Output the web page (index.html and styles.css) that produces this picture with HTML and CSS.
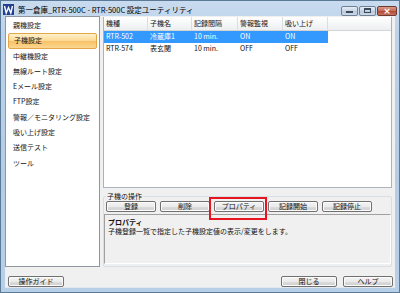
FILE: index.html
```html
<!DOCTYPE html>
<html lang="ja">
<head>
  <meta charset="UTF-8" />
  <title>第一倉庫_RTR-500C - RTR-500C 設定ユーティリティ</title>
  <link rel="stylesheet" href="styles.css">
</head>
<body>
  <div class="window">
    <!-- Title bar -->
    <div class="titlebar">
      <svg class="app-icon" width="11" height="11" viewBox="0 0 11 11">
        <rect x="0" y="0" width="11" height="11" fill="#23408e"/>
        <polyline points="1.5,2 3.2,9 5.5,3.5 7.8,9 9.5,2" fill="none" stroke="#fff" stroke-width="1.4"/>
      </svg>
      <span class="title">第一倉庫_RTR-500C - RTR-500C 設定ユーティリティ</span>
      <div class="controls">
        <div class="ctrl"><span class="glyph-min"></span></div>
        <div class="ctrl"><span class="glyph-max"></span></div>
        <div class="ctrl close"><span class="glyph-x">×</span></div>
      </div>
    </div>

    <div class="client">
      <div class="main">
        <!-- Left menu -->
        <ul class="menu">
          <li>親機設定</li>
          <li class="selected">子機設定</li>
          <li>中継機設定</li>
          <li>無線ルート設定</li>
          <li>Eメール設定</li>
          <li>FTP設定</li>
          <li>警報／モニタリング設定</li>
          <li>吸い上げ設定</li>
          <li>送信テスト</li>
          <li>ツール</li>
        </ul>

        <div class="content">
          <!-- Remote unit list -->
          <div class="listview">
            <div class="row head">
              <div class="cell">機種</div>
              <div class="cell">子機名</div>
              <div class="cell">記録間隔</div>
              <div class="cell">警報監視</div>
              <div class="cell">吸い上げ</div>
              <div class="cell filler"></div>
            </div>
            <div class="row active">
              <div class="cell">RTR-502</div>
              <div class="cell">冷蔵庫1</div>
              <div class="cell">10 min.</div>
              <div class="cell">ON</div>
              <div class="cell">ON</div>
            </div>
            <div class="row">
              <div class="cell">RTR-574</div>
              <div class="cell">表玄関</div>
              <div class="cell">10 min.</div>
              <div class="cell">OFF</div>
              <div class="cell">OFF</div>
            </div>
          </div>

          <!-- Operations -->
          <fieldset class="group">
            <legend>子機の操作</legend>
            <div class="ops">
              <button class="btn">登録</button>
              <button class="btn">削除</button>
              <button class="btn">プロパティ</button>
              <button class="btn">記録開始</button>
              <button class="btn">記録停止</button>
            </div>
            <div class="desc">
              <div class="desc-title">プロパティ</div>
              <div>子機登録一覧で指定した子機設定値の表示/変更をします。</div>
            </div>
            <div class="highlight"></div>
          </fieldset>
        </div>
      </div>

      <div class="footer">
        <button class="btn wide">操作ガイド</button>
        <div class="spacer"></div>
        <button class="btn wide">閉じる</button>
        <button class="btn wide">ヘルプ</button>
      </div>
    </div>
  </div>
</body>
</html>
```

FILE: styles.css
```css
* {
  box-sizing: border-box;
}

html, body {
  margin: 0;
  padding: 0;
  width: 400px;
  height: 293px;
  overflow: hidden;
}

body {
  font-family: "Noto Sans CJK JP", "Liberation Sans", sans-serif;
  font-size: 7px;
  color: #111;
}

.window {
  width: 400px;
  height: 293px;
  border: 1px solid #5b7a98;
  background: linear-gradient(to bottom, #c8dbef 0%, #bcd2ea 12%, #b4cce6 60%, #b8cfe8 100%);
  display: flex;
  flex-direction: column;
}

/* Title bar */
.titlebar {
  height: 15px;
  display: flex;
  align-items: center;
  padding: 0 2px 0 2px;
}

.app-icon {
  flex: none;
  margin-right: 4px;
  margin-top: 1px;
}

.title {
  font-size: 7.5px;
  color: #000;
  white-space: nowrap;
  margin-top: 2px;
}

.controls {
  margin-left: auto;
  display: flex;
  gap: 1px;
  margin-top: 4px;
}

.ctrl {
  width: 17px;
  height: 10px;
  border: 1px solid #6f8196;
  border-radius: 2px;
  background: linear-gradient(to bottom, #e6edf5, #c9d5e2 50%, #b9c8d8 51%, #cdd9e6);
  display: flex;
  align-items: center;
  justify-content: center;
}

.ctrl.close {
  width: 20px;
  border-color: #6b3a30;
  background: linear-gradient(to bottom, #d99a8a, #c46a55 50%, #b04a36 51%, #c8725c);
}

.glyph-min {
  width: 7px;
  height: 2px;
  background: #3a4a5c;
  margin-top: 3px;
}

.glyph-max {
  width: 7px;
  height: 5px;
  border: 1px solid #3a4a5c;
  border-top-width: 2px;
}

.glyph-x {
  color: #fff;
  font-family: "DejaVu Sans", sans-serif;
  font-weight: bold;
  font-size: 9px;
  line-height: 8px;
}

/* Client area */
.client {
  flex: 1;
  margin: 0 4px 4px 4px;
  background: #f0f0f0;
  display: flex;
  flex-direction: column;
  border-bottom: 1px solid #e3e8ee;
}

.main {
  height: 251px;
  display: flex;
  gap: 3px;
}

.menu {
  width: 95px;
  margin: 0;
  padding: 1px 1px 0 1px;
  list-style: none;
  background: #fff;
  border: 1px solid #8e969f;
}

.menu li {
  height: 15.3px;
  line-height: 15.3px;
  padding-left: 6px;
  white-space: nowrap;
}

.menu li.selected {
  margin: 0 1px;
  padding-left: 5px;
  border: 1px solid #e3a54a;
  border-radius: 2px;
  line-height: 13.3px;
  background: linear-gradient(to bottom, #fff1cc, #fcd891 50%, #f8c266 51%, #fbd690);
}

.content {
  width: 289px;
  padding-top: 1px;
  display: flex;
  flex-direction: column;
}

/* List view */
.listview {
  height: 174px;
  background: #fff;
  border: 1px solid #a9b3bd;
  border-top: none;
}

.row {
  display: grid;
  grid-template-columns: 44px 44px 46px 45px 45px;
  height: 11.5px;
  line-height: 11.5px;
}

.row.head {
  grid-template-columns: 44px 44px 46px 45px 45px 1fr;
  height: 14px;
  line-height: 13px;
  background: linear-gradient(to bottom, #ffffff, #f6f7f8 50%, #eceef0);
  border-bottom: 1px solid #d5d5d5;
}

.row.head .cell {
  border-right: 1px solid #dadde1;
}

.row.head .cell.filler {
  border-right: none;
}

.cell {
  padding-left: 2px;
  white-space: nowrap;
  overflow: hidden;
}

.row.active {
  background: #3399ff;
  color: #fff;
  width: 224px;
}

/* Group box */
.group {
  position: relative;
  margin: 5px 0 0 0;
  padding: 1px 0 2px 0;
  border: 1px solid #d5dfe5;
  border-radius: 2px;
  flex: 1;
  min-width: 0;
}

.group legend {
  padding: 0 1px;
  margin-left: 2px;
  line-height: 7px;
}

.ops {
  display: flex;
  gap: 4px;
  padding-left: 2px;
}

.btn {
  font-family: inherit;
  font-size: 7px;
  color: #111;
  width: 50px;
  height: 11px;
  padding: 0;
  line-height: 9px;
  border: 1px solid #707070;
  border-radius: 2px;
  background: linear-gradient(to bottom, #f3f3f3, #ebebeb 50%, #dddddd 51%, #cfcfcf);
  box-shadow: inset 0 0 0 1px #fcfcfc;
}

.desc {
  margin-top: 2px;
  height: 50px;
  padding: 3px 3px;
  line-height: 8.5px;
  border: 1px solid #a0a0a0;
  border-right-color: #fff;
  border-bottom-color: #fff;
  background: #f0f0f0;
}

.desc-title {
  font-weight: bold;
}

/* Annotation drawn over the Property button */
.highlight {
  position: absolute;
  left: 105px;
  top: -3px;
  width: 58px;
  height: 23px;
  border: 2px solid #e8141e;
}

/* Footer buttons */
.footer {
  display: flex;
  gap: 6px;
  margin-top: 9px;
  padding: 0 2px 0 3px;
}

.spacer {
  flex: 1;
}

.btn.wide {
  width: 56px;
}

.footer .btn:last-child {
  width: 50px;
}
```
